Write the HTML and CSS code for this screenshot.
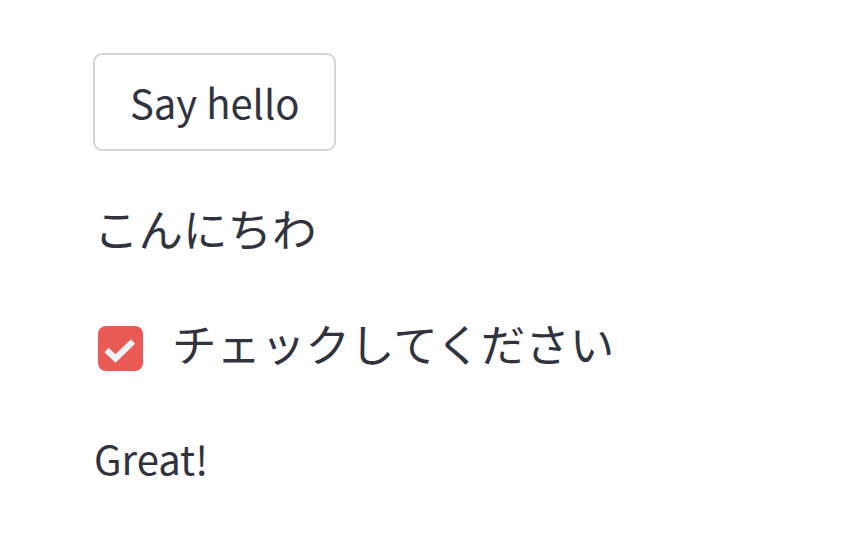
FILE: index.html
```html
<!DOCTYPE html>
<html lang="ja">
<head>
<meta charset="utf-8">
<link rel="stylesheet" href="styles.css">
</head>
<body>
<main class="app">
  <div class="block">
    <button class="btn" type="button">Say hello</button>
  </div>
  <p class="text greeting">こんにちわ</p>
  <label class="checkbox">
    <span class="box">
      <svg viewBox="0 0 45 45" width="45" height="45" aria-hidden="true">
        <polyline points="8.5,24 17.5,32.5 35,15.5" fill="none" stroke="#f0f2f6" stroke-width="6" stroke-linecap="butt" stroke-linejoin="miter"/>
      </svg>
    </span>
    <span class="label">チェックしてください</span>
  </label>
  <p class="text result">Great!</p>
</main>
</body>
</html>
```

FILE: styles.css
```css
html, body {
  margin: 0;
  padding: 0;
  background: #ffffff;
}
body {
  font-family: "Noto Sans CJK JP", "Source Sans Pro", sans-serif;
  color: #31333f;
  font-size: 44.5px;
}
.app {
  padding: 53px 0 0 93px;
  display: flex;
  flex-direction: column;
  align-items: flex-start;
}
.btn {
  font-family: inherit;
  font-size: 40px;
  color: #31333f;
  background: #ffffff;
  border: 2px solid #d6d6d9;
  border-radius: 9px;
  height: 98px;
  padding: 0 34px 0 35px;
  line-height: 1;
  cursor: pointer;
}
.text {
  margin: 0;
  line-height: 64px;
}
.greeting {
  margin-top: 45px;
  margin-left: 1px;
}
.checkbox {
  display: flex;
  align-items: center;
  gap: 29px;
  margin-top: 56px;
  margin-left: 5px;
}
.box {
  width: 45px;
  height: 45px;
  border-radius: 8px;
  background: #e95a54;
  display: flex;
}
.label {
  line-height: 64px;
  position: relative;
  top: -5px;
}
.result {
  margin-top: 46px;
  font-size: 40px;
  margin-left: 1px;
}
```
